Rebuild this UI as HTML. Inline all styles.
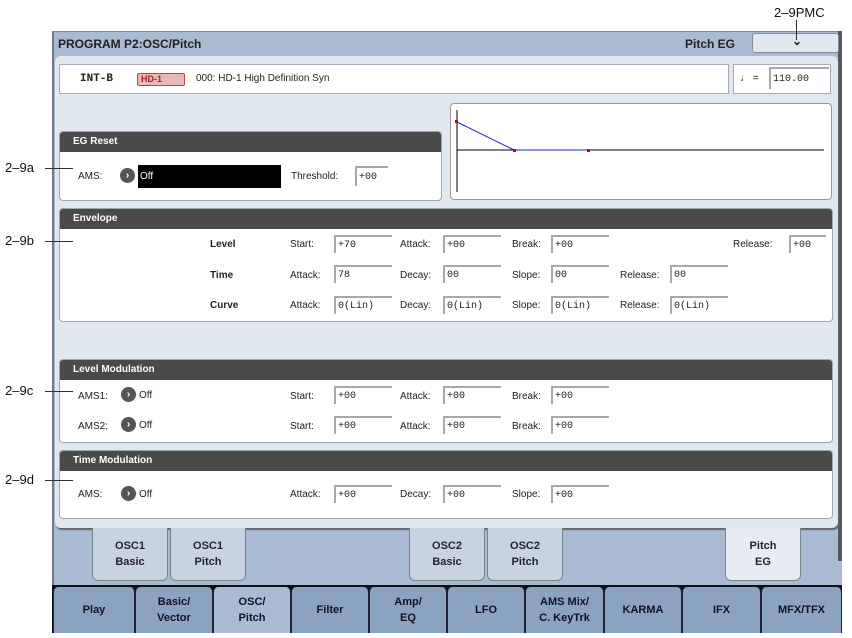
<!DOCTYPE html>
<html><head><meta charset="utf-8"><style>
*{margin:0;padding:0;box-sizing:border-box}
body{width:852px;height:638px;background:#fff;position:relative;overflow:hidden;font-family:"Liberation Sans",sans-serif;font-size:10px;color:#222}
.a{position:absolute}
.b{font-weight:bold}
.sec{position:absolute;background:#fff;border:1px solid #9aa;border-radius:4px;overflow:hidden}
.hd{position:absolute;left:0;right:0;top:0;height:20px;background:#4a4a4a;color:#fff;font-weight:bold;font-size:10px;padding:4px 0 0 13px}
.f{position:absolute;width:58px;height:18px;background:#fff;border-top:2px solid #a8a8a8;border-left:2px solid #a8a8a8;font-family:"Liberation Mono",monospace;font-size:10px;padding:3px 0 0 2px;line-height:11px}
.lb{position:absolute;font-size:10px}
.ic{position:absolute;width:15px;height:15px;border-radius:50%;background:#555;color:#fff;font-size:10px;font-weight:bold;text-align:center;line-height:15px}
.tab{position:absolute;text-align:center;font-weight:bold;font-size:11px;line-height:16px;border-radius:0 0 6px 6px}
.st{top:528px;height:53px;width:76px;background:#c8d3e2;border:1px solid #788;border-top:none;padding-top:10px;color:#223}
.bt{top:587px;height:46px;background:#8ba3c1;border-left:1px solid #223;border-right:1px solid #223;border-radius:5px 5px 0 0;color:#112;display:flex;align-items:center;justify-content:center}
.ann{position:absolute;font-size:13px;color:#111}
.ln{position:absolute;height:1px;background:#333}
</style></head><body>
<div class="a" style="left:52px;top:31px;width:790px;height:602px;background:#a8bbd3;border-left:2px solid #778;border-top:1px solid #889"></div>
<div class="a" style="left:838px;top:31px;width:4px;height:530px;background:#556"></div>
<div class="a b" style="left:58px;top:37px;font-size:12px;color:#222">PROGRAM P2:OSC/Pitch</div>
<div class="a b" style="left:685px;top:37px;font-size:12px">Pitch EG</div>
<div class="a" style="left:752px;top:33px;width:87px;height:20px;background:#e1e7ef;border:1px solid #889;border-radius:3px"></div>
<div class="a b" style="left:792px;top:34px;font-size:12px">⌄</div>
<div class="a" style="left:55px;top:56px;width:783px;height:472px;background:#e1e7ef;border-radius:6px;box-shadow:1px 2px 1px #666"></div>
<div class="a" style="left:59px;top:64px;width:670px;height:30px;background:#fff;border:1px solid #aab"></div>
<div class="a b" style="left:80px;top:73px;font-size:11px;font-family:'Liberation Mono',monospace">INT-B</div>
<div class="a" style="left:137px;top:73px;width:48px;height:13px;background:#e8b8b8;border:1px solid #b44;border-radius:2px;color:#a22;font-weight:bold;font-size:9px;padding-left:3px;line-height:11px">HD-1</div>
<div class="a" style="left:196px;top:73px;font-size:10px">000: HD-1 High Definition Syn</div>
<div class="a" style="left:733px;top:64px;width:98px;height:30px;background:#fff;border:1px solid #aab"></div>
<div class="a" style="left:740px;top:73px">♩ =</div>
<div class="f" style="left:769px;top:67px;width:60px;height:22px;padding-top:5px">110.00</div>
<div class="sec" style="left:59px;top:131px;width:383px;height:70px"><div class="hd">EG Reset</div></div>
<div class="lb" style="left:78px;top:171px">AMS:</div>
<div class="ic" style="left:120px;top:168px">›</div>
<div class="a" style="left:138px;top:165px;width:143px;height:23px;background:#000;color:#fff;padding:6px 0 0 2px">Off</div>
<div class="lb" style="left:291px;top:171px">Threshold:</div>
<div class="f" style="left:355px;top:166px;width:33px;height:20px;padding-top:4px">+00</div>
<div class="a" style="left:450px;top:103px;width:382px;height:97px;background:#fff;border:1px solid #999;border-radius:4px"></div>
<svg class="a" style="left:450px;top:103px" width="382" height="97">
<line x1="7" y1="7" x2="7" y2="89" stroke="#000"/>
<line x1="7" y1="47" x2="374" y2="47" stroke="#000"/>
<polyline points="7,19 64,47 138,47" fill="none" stroke="#22c"/>
<rect x="5" y="17" width="3" height="3" fill="#c00"/><rect x="63" y="46" width="3" height="3" fill="#c00"/><rect x="137" y="46" width="3" height="3" fill="#c00"/>
</svg>
<div class="sec" style="left:59px;top:208px;width:774px;height:114px"><div class="hd">Envelope</div></div>
<div class="lb b" style="left:210px;top:239px">Level</div>
<div class="lb b" style="left:210px;top:270px">Time</div>
<div class="lb b" style="left:210px;top:300px">Curve</div>
<div class="lb" style="left:290px;top:239px">Start:</div><div class="f" style="left:334px;top:235px">+70</div>
<div class="lb" style="left:400px;top:239px">Attack:</div><div class="f" style="left:443px;top:235px">+00</div>
<div class="lb" style="left:512px;top:239px">Break:</div><div class="f" style="left:551px;top:235px">+00</div>
<div class="lb" style="left:733px;top:239px">Release:</div><div class="f" style="left:789px;top:235px;width:37px">+00</div>
<div class="lb" style="left:290px;top:270px">Attack:</div><div class="f" style="left:334px;top:265px">78</div>
<div class="lb" style="left:400px;top:270px">Decay:</div><div class="f" style="left:443px;top:265px">00</div>
<div class="lb" style="left:512px;top:270px">Slope:</div><div class="f" style="left:551px;top:265px">00</div>
<div class="lb" style="left:620px;top:270px">Release:</div><div class="f" style="left:670px;top:265px">00</div>
<div class="lb" style="left:290px;top:300px">Attack:</div><div class="f" style="left:334px;top:296px">0(Lin)</div>
<div class="lb" style="left:400px;top:300px">Decay:</div><div class="f" style="left:443px;top:296px">0(Lin)</div>
<div class="lb" style="left:512px;top:300px">Slope:</div><div class="f" style="left:551px;top:296px">0(Lin)</div>
<div class="lb" style="left:620px;top:300px">Release:</div><div class="f" style="left:670px;top:296px">0(Lin)</div>
<div class="sec" style="left:59px;top:359px;width:774px;height:84px"><div class="hd">Level Modulation</div></div>
<div class="lb" style="left:78px;top:391px">AMS1:</div><div class="ic" style="left:121px;top:387px">›</div><div class="lb" style="left:139px;top:390px">Off</div>
<div class="lb" style="left:78px;top:421px">AMS2:</div><div class="ic" style="left:121px;top:417px">›</div><div class="lb" style="left:139px;top:420px">Off</div>
<div class="lb" style="left:290px;top:391px">Start:</div><div class="f" style="left:334px;top:386px">+00</div>
<div class="lb" style="left:400px;top:391px">Attack:</div><div class="f" style="left:443px;top:386px">+00</div>
<div class="lb" style="left:512px;top:391px">Break:</div><div class="f" style="left:551px;top:386px">+00</div>
<div class="lb" style="left:290px;top:421px">Start:</div><div class="f" style="left:334px;top:416px">+00</div>
<div class="lb" style="left:400px;top:421px">Attack:</div><div class="f" style="left:443px;top:416px">+00</div>
<div class="lb" style="left:512px;top:421px">Break:</div><div class="f" style="left:551px;top:416px">+00</div>
<div class="sec" style="left:59px;top:450px;width:774px;height:69px"><div class="hd">Time Modulation</div></div>
<div class="lb" style="left:78px;top:489px">AMS:</div><div class="ic" style="left:121px;top:486px">›</div><div class="lb" style="left:139px;top:489px">Off</div>
<div class="lb" style="left:290px;top:489px">Attack:</div><div class="f" style="left:334px;top:485px">+00</div>
<div class="lb" style="left:400px;top:489px">Decay:</div><div class="f" style="left:443px;top:485px">+00</div>
<div class="lb" style="left:512px;top:489px">Slope:</div><div class="f" style="left:551px;top:485px">+00</div>
<div class="tab st" style="left:92px">OSC1<br>Basic</div>
<div class="tab st" style="left:170px">OSC1<br>Pitch</div>
<div class="tab st" style="left:409px">OSC2<br>Basic</div>
<div class="tab st" style="left:487px">OSC2<br>Pitch</div>
<div class="tab st" style="left:725px;background:#e8ecf2">Pitch<br>EG</div>
<div class="a" style="left:52px;top:585px;width:790px;height:48px;background:#111"></div>
<div class="tab bt" style="left:53px;width:82px">Play</div>
<div class="tab bt" style="left:135px;width:78px">Basic/<br>Vector</div>
<div class="tab bt" style="left:213px;width:78px;background:#a8bbd3">OSC/<br>Pitch</div>
<div class="tab bt" style="left:291px;width:78px">Filter</div>
<div class="tab bt" style="left:369px;width:78px">Amp/<br>EQ</div>
<div class="tab bt" style="left:447px;width:78px">LFO</div>
<div class="tab bt" style="left:525px;width:79px">AMS Mix/<br>C. KeyTrk</div>
<div class="tab bt" style="left:604px;width:78px">KARMA</div>
<div class="tab bt" style="left:682px;width:79px">IFX</div>
<div class="tab bt" style="left:761px;width:81px">MFX/TFX</div>
<div class="ann" style="left:5px;top:160px">2–9a</div><div class="ln" style="left:45px;top:168px;width:28px"></div>
<div class="ann" style="left:5px;top:233px">2–9b</div><div class="ln" style="left:45px;top:241px;width:28px"></div>
<div class="ann" style="left:5px;top:383px">2–9c</div><div class="ln" style="left:45px;top:391px;width:28px"></div>
<div class="ann" style="left:5px;top:472px">2–9d</div><div class="ln" style="left:45px;top:480px;width:28px"></div>
<div class="ann" style="left:774px;top:5px">2–9PMC</div>
<div class="a" style="left:796px;top:20px;width:1px;height:20px;background:#333"></div>
</body></html>
